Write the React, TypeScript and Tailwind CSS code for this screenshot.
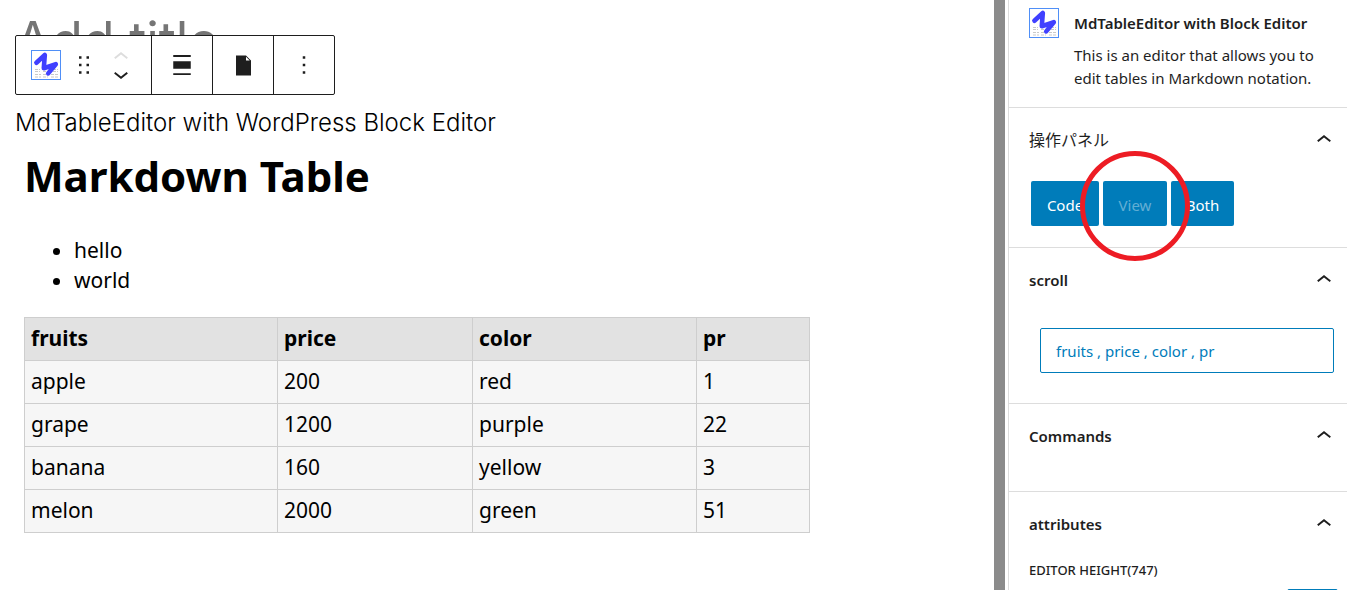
import type { ReactNode } from 'react';

const columns = ['fruits', 'price', 'color', 'pr'];
const rows = [
  ['apple', '200', 'red', '1'],
  ['grape', '1200', 'purple', '22'],
  ['banana', '160', 'yellow', '3'],
  ['melon', '2000', 'green', '51'],
];

function Glyph({ d, className = 'size-[30px]' }: { d: string; className?: string }) {
  return (
    <svg viewBox="0 0 24 24" fill="currentColor" aria-hidden="true" className={`shrink-0 ${className}`}>
      <path d={d} />
    </svg>
  );
}

const chevronUp = 'M6.5 12.4L12 8l5.5 4.4-.9 1.2L12 10l-4.5 3.6-1-1.2z';
const chevronDown = 'M17.5 11.6L12 16l-5.5-4.4.9-1.2L12 14l4.5-3.6 1 1.2z';
const dragHandle =
  'M8 7h2V5H8v2zm0 6h2v-2H8v2zm0 6h2v-2H8v2zm6-14v2h2V5h-2zm0 8h2v-2h-2v2zm0 6h2v-2h-2v2z';
const alignNone = 'M19 5.5H5V4h14v1.5ZM19 20H5v-1.5h14V20ZM5 9h14v6H5V9Z';
const moreVertical = 'M13 19h-2v-2h2v2zm0-6h-2v-2h2v2zm0-6h-2V5h2v2z';

function Logo() {
  return (
    <svg viewBox="0 0 30 30" aria-hidden="true" className="size-[30px] shrink-0">
      <rect x="0.5" y="0.5" width="29" height="29" fill="#fff" stroke="#4f8ff7" />
      <g stroke="#c9c9c9" strokeWidth="1" strokeDasharray="3 1">
        <path d="M4 19.5h5M4 21.5h5M4 24.5h6M4 27h6" />
        <path d="M12 21.5h4M12 24.5h5M12 27h5" />
        <path d="M22 19.5h5M22 21.5h5M20 24.5h7M20 27h7" />
      </g>
      <path
        d="M5.4 12.8L13.8 5L12.8 18.2L24.8 14.2L17.2 23.4"
        fill="none"
        stroke="#4040ff"
        strokeWidth="4.6"
        strokeLinecap="round"
        strokeLinejoin="round"
      />
    </svg>
  );
}

function ToolbarButton({ label, children }: { label: string; children: ReactNode }) {
  return (
    <button
      type="button"
      aria-label={label}
      className="flex w-[61px] items-center justify-center border-l border-[#1e1e1e]"
    >
      {children}
    </button>
  );
}

function Toolbar() {
  return (
    <div
      role="toolbar"
      aria-label="Block tools"
      className="relative flex h-[60px] w-fit rounded-xs border border-[#1e1e1e] bg-white text-[#1e1e1e]"
    >
      <div className="flex items-center px-[15px]">
        <button type="button" aria-label="MdTableEditor" className="mr-2">
          <Logo />
        </button>
        <button type="button" aria-label="Drag" className="mr-[7px]">
          <Glyph d={dragHandle} />
        </button>
        <div className="flex w-[30px] flex-col">
          <button type="button" disabled aria-label="Move up" className="flex h-[17px] items-center justify-center text-[#dddddd]">
            <Glyph d={chevronUp} />
          </button>
          <button type="button" aria-label="Move down" className="flex h-[17px] items-center justify-center">
            <Glyph d={chevronDown} />
          </button>
        </div>
      </div>
      <ToolbarButton label="Align">
        <Glyph d={alignNone} />
      </ToolbarButton>
      <ToolbarButton label="Media">
        <svg viewBox="0 0 20 20" fill="currentColor" aria-hidden="true" className="size-[25px]">
          <path d="M12 2l4 4v12H4V2h8zm0 4h3l-3-3v3z" />
        </svg>
      </ToolbarButton>
      <ToolbarButton label="Options">
        <Glyph d={moreVertical} />
      </ToolbarButton>
    </div>
  );
}

function Panel({
  title,
  titleClassName = 'text-[15px] font-semibold',
  className,
  children,
}: {
  title: string;
  titleClassName?: string;
  className: string;
  children?: ReactNode;
}) {
  return (
    <section className={`border-t border-[#dddddd] ${className}`}>
      <h2>
        <button
          type="button"
          aria-expanded="true"
          className={`flex h-16 w-full items-center justify-between pr-2 pl-5 ${titleClassName}`}
        >
          {title}
          <Glyph d={chevronUp} />
        </button>
      </h2>
      {children}
    </section>
  );
}

const modeButton = 'h-[45px] rounded-xs bg-[#007cba] pt-[3px] text-white disabled:text-white/40';

function Sidebar() {
  return (
    <aside className="w-[339px] shrink-0 overflow-hidden border-l border-[#dddddd] bg-white font-['Noto_Sans','Noto_Sans_CJK_JP',sans-serif] text-[15px] text-[#1e1e1e]">
      <div className="flex gap-[15px] px-5 pt-2 pb-[17px]">
        <Logo />
        <div>
          <h2 className="pt-1 font-semibold leading-[23px]">MdTableEditor with Block Editor</h2>
          <p className="pt-[9px] leading-[23px]">This is an editor that allows you to edit tables in Markdown notation.</p>
        </div>
      </div>
      <Panel title="操作パネル" titleClassName="text-[16px]" className="pb-[21px]">
        <div className="flex gap-1 px-[22px] pt-[9px]">
          <button type="button" className={`w-[68px] ${modeButton}`}>
            Code
          </button>
          <div className="relative">
            <button type="button" disabled className={`w-16 ${modeButton}`}>
              View
            </button>
            <span className="pointer-events-none absolute -top-[30px] left-1/2 size-[110px] -translate-x-1/2 rounded-full border-[5px] border-[#ed1c24]" />
          </div>
          <button type="button" className={`w-[63px] ${modeButton}`}>
            Both
          </button>
        </div>
      </Panel>
      <Panel title="scroll" className="pb-[30px]">
        <div className="flex pt-4 pr-[13px] pl-[31px]">
          <button
            type="button"
            className="h-[45px] grow rounded-xs border border-[#007cba] px-[15px] pt-[2px] text-left text-[#007cba]"
          >
            fruits , price , color , pr
          </button>
        </div>
      </Panel>
      <Panel title="Commands" className="pb-[23px]" />
      <Panel title="attributes" className="pb-4">
        <div className="pr-[9px] pl-5">
          <label htmlFor="editor-height" className="block pt-[3px] text-[13px] font-medium leading-[22px] uppercase">
            Editor height(747)
          </label>
          <div className="flex justify-end pt-2">
            <input
              id="editor-height"
              type="number"
              defaultValue={747}
              className="h-10 w-[51px] rounded-xs border border-[#007cba] px-1"
            />
          </div>
        </div>
      </Panel>
    </aside>
  );
}

export default function App() {
  return (
    <div className="flex h-screen overflow-hidden bg-white text-black">
      <main className="min-w-0 grow overflow-hidden pl-[15px]">
        <h1 className="h-[35px] pt-[11px] font-[Inter,sans-serif] text-[52px] leading-[60px] font-normal whitespace-nowrap text-[#757575]">
          Add title
        </h1>
        <Toolbar />
        <p className="pt-3 font-[Inter,sans-serif] text-[24px] leading-8 font-light">
          MdTableEditor with WordPress Block Editor
        </p>
        <div className="pt-[6px] pl-[9px] font-['Noto_Sans',sans-serif] text-[21px]">
          <h2 className="text-[42px] leading-[62px] font-bold">Markdown Table</h2>
          <ul className="list-disc pt-7 pl-[50px] leading-[30px]">
            <li>hello</li>
            <li>world</li>
          </ul>
          <table className="mt-[22px] w-[786px] table-fixed border-collapse text-left">
            <colgroup>
              <col className="w-[253px]" />
              <col className="w-[195px]" />
              <col className="w-[224px]" />
              <col />
            </colgroup>
            <thead className="bg-[#e2e2e2]">
              <tr>
                {columns.map((name) => (
                  <th key={name} className="h-[43px] border border-[#cecece] px-1.5 pb-[3px] font-bold leading-[30px]">
                    {name}
                  </th>
                ))}
              </tr>
            </thead>
            <tbody className="bg-[#f6f6f6]">
              {rows.map((row) => (
                <tr key={row[0]}>
                  {row.map((cell, i) => (
                    <td key={columns[i]} className="h-[43px] border border-[#cecece] px-1.5 pb-[3px] leading-[30px]">
                      {cell}
                    </td>
                  ))}
                </tr>
              ))}
            </tbody>
          </table>
        </div>
      </main>
      <div className="mr-[3px] w-[11px] shrink-0 bg-[#8b8b8b]" />
      <Sidebar />
    </div>
  );
}
